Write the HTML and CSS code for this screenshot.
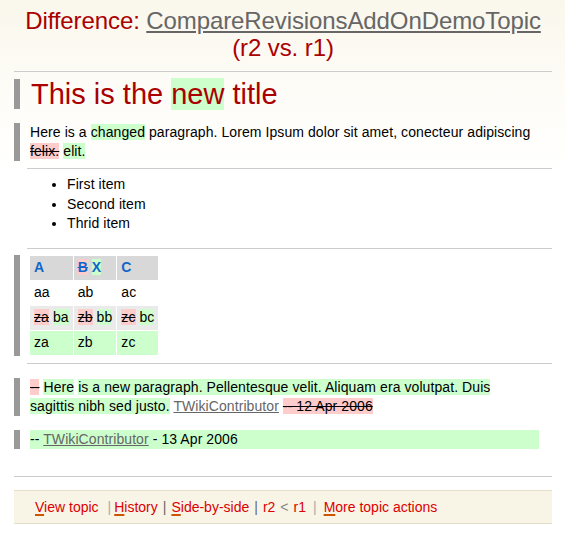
FILE: index.html
```html
<!DOCTYPE html>
<html>
<head>
<meta charset="utf-8">
<title>Difference: CompareRevisionsAddOnDemoTopic</title>
<link rel="stylesheet" href="styles.css">
</head>
<body>
<div class="page">
  <div class="header">
    <h1><span class="label">Difference:</span> <a href="#">CompareRevisionsAddOnDemoTopic</a><br>(r2 vs. r1)</h1>
  </div>
  <hr class="rule rule-top">

  <div class="block title-block">
    <h2>This is the <ins>new</ins> title</h2>
  </div>

  <div class="block para-block">
    <p>Here is a <ins>changed</ins> paragraph. Lorem Ipsum dolor sit amet, conecteur adipiscing <del>felix.</del> <ins>elit.</ins></p>
  </div>

  <hr class="rule rule-inner rule-a">

  <ul class="items">
    <li>First item</li>
    <li>Second item</li>
    <li>Thrid item</li>
  </ul>

  <hr class="rule rule-inner rule-b">

  <div class="block table-block">
    <table class="grid">
      <tr class="head">
        <th>A</th>
        <th><del>B</del> <ins>X</ins></th>
        <th>C</th>
      </tr>
      <tr class="plain">
        <td>aa</td><td>ab</td><td>ac</td>
      </tr>
      <tr class="changed">
        <td><del>za</del> <ins>ba</ins></td>
        <td><del>zb</del> <ins>bb</ins></td>
        <td><del>zc</del> <ins>bc</ins></td>
      </tr>
      <tr class="added">
        <td>za</td><td>zb</td><td>zc</td>
      </tr>
    </table>
  </div>

  <hr class="rule rule-inner rule-c">

  <div class="block new-block">
    <p><del>--</del> <ins>Here</ins> <ins>is a new paragraph. Pellentesque velit. Aliquam era volutpat. Duis sagittis nibh sed justo.</ins> <a href="#">TWikiContributor</a> <del>-- 12 Apr 2006</del></p>
  </div>

  <div class="block sig-block">
    <p class="sig">-- <a href="#">TWikiContributor</a> - 13 Apr 2006</p>
  </div>

  <hr class="rule rule-bottom">

  <div class="footer">
    <a href="#" class="act"><span class="key">V</span>iew topic</a>
    <span class="sep light">|</span>
    <a href="#" class="act"><span class="key">H</span>istory</a>
    <span class="sep">|</span>
    <a href="#" class="act"><span class="key">S</span>ide-by-side</a>
    <span class="sep">|</span>
    <span class="rev">r2</span>
    <span class="lt">&lt;</span>
    <span class="rev">r1</span>
    <span class="sep light last">|</span>
    <a href="#" class="act"><span class="key">M</span>ore topic actions</a>
  </div>
</div>
</body>
</html>
```

FILE: styles.css
```css
* {
  box-sizing: border-box;
}

html, body {
  margin: 0;
  padding: 0;
}

body {
  font-family: "Liberation Sans", Arial, sans-serif;
  font-size: 14px;
  letter-spacing: 0.08px;
  color: #000;
  background: #fff linear-gradient(#faf7ec 0, #fdfcf7 90px, #fff 170px) no-repeat;
  min-height: 537px;
}

.page {
  padding: 8px 13px 0 14px;
}

/* Header */
.header h1 {
  margin: 0;
  font-size: 24px;
  line-height: 26.5px;
  letter-spacing: -0.1px;
  font-weight: normal;
  text-align: center;
  color: #aa0000;
}

.header a {
  color: #666;
  text-decoration: underline;
}

/* Rules */
.rule {
  border: 0;
  border-top: 1px solid #cccccc;
  height: 0;
  margin: 0;
}

.rule-top {
  margin-top: 10px;
}

.rule-inner {
  margin-left: 13px;
}

.rule-a {
  margin-top: 7px;
}

.rule-b {
  margin-top: 14px;
}

.rule-c {
  margin-top: 7px;
}

.rule-bottom {
  margin-top: 27px;
}

/* Diff blocks */
.block {
  border-left: 6px solid #999999;
  padding-left: 10px;
  margin-right: 13px;
}

.block p {
  margin: 0;
  line-height: 19px;
}

ins {
  background: #ccffcc;
  text-decoration: none;
}

del {
  background: #ffcccc;
  text-decoration: line-through;
}

a {
  color: #666;
  text-decoration: underline;
}

.title-block {
  margin-top: 7px;
}

.title-block h2 {
  margin: 0;
  padding-left: 1px;
  font-size: 29px;
  line-height: 30px;
  letter-spacing: 0;
  font-weight: normal;
  color: #aa0000;
}

.para-block {
  margin-top: 14px;
}

/* List */
.items {
  margin: 6px 0 0;
  padding-left: 53px;
  line-height: 19.5px;
  list-style: disc;
}

/* Table */
.table-block {
  margin-top: 6px;
  padding-left: 10px;
}

.grid {
  border-collapse: separate;
  border-spacing: 1px;
  margin-left: -1px;
}

.grid th,
.grid td {
  height: 24px;
  padding: 0 4px;
  text-align: left;
  vertical-align: middle;
  white-space: nowrap;
  font-size: 14px;
  line-height: 17px;
}

.grid .head th {
  background: #d8d8d8;
  color: #1166cc;
  font-weight: bold;
}

.grid .plain td {
  background: #fff;
}

.grid .changed td {
  background: #eaeaea;
}

.grid .added td {
  background: #ccffcc;
}

.new-block {
  margin-top: 14px;
  margin-right: 24px;
}

.sig-block {
  margin-top: 14px;
}

.sig-block .sig {
  background: #ccffcc;
}

/* Footer */
.footer {
  margin-top: 13px;
  height: 34px;
  border-top: 1px solid #e4ddc8;
  border-bottom: 1px solid #e4ddc8;
  background: #f8f5e7;
  display: flex;
  align-items: center;
  padding-left: 21px;
  font-size: 14px;
  letter-spacing: 0;
  color: #dd0000;
}

.footer .act {
  color: #dd0000;
  text-decoration: none;
}

.footer .key {
  text-decoration: underline;
  text-decoration-color: #cc5500;
  text-decoration-thickness: 2px;
  text-underline-offset: 2px;
}

.footer .sep {
  color: #666;
  margin: 0 5px;
}

.footer .sep.light {
  color: #aaa;
  margin: 0 3px 0 9px;
}

.footer .sep.light.last {
  margin: 0 7px 0 7px;
}

.footer .rev {
  color: #dd0000;
}

.footer .lt {
  color: #888;
  margin: 0 5px;
}
```
